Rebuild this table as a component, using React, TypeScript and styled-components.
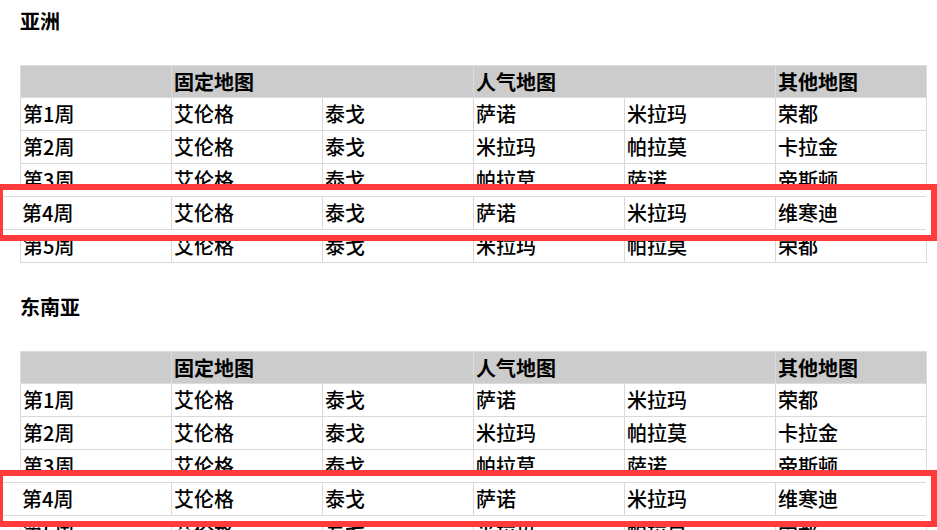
import React from 'react';
import styled, { createGlobalStyle } from 'styled-components';

const GlobalStyle = createGlobalStyle`
  html, body {
    margin: 0;
    padding: 0;
    background: #ffffff;
  }
  body {
    font-family: "Noto Sans CJK SC", "Noto Sans", sans-serif;
    color: #000;
    overflow: hidden;
  }
`;

const Page = styled.div`
  padding: 7px 10px 0 20px;
`;

const Section = styled.section`
  & + & {
    margin-top: 30px;
  }
`;

const Title = styled.h2`
  margin: 0 0 30px;
  font-size: 20px;
  font-weight: 700;
  line-height: 28px;
`;

const TableWrap = styled.div`
  position: relative;
  width: 907px;
`;

const Table = styled.table`
  width: 907px;
  border-collapse: collapse;
  table-layout: fixed;
  font-size: 20px;
  line-height: 28px;
`;

const HeadCell = styled.th`
  height: 32px;
  padding: 0 2px;
  background: #cccccc;
  border: 1px solid #dcdcdc;
  text-align: left;
  font-weight: 700;
  box-sizing: border-box;
`;

const Cell = styled.td`
  height: 33px;
  padding: 0 2px;
  border: 1px solid #d9d9d9;
  font-weight: 500;
  box-sizing: border-box;
  white-space: nowrap;
`;

// the pasted, red-framed copy of week 4 lying over the table
const Callout = styled.div<{ $top: number }>`
  position: absolute;
  left: -20px;
  top: ${(p) => p.$top}px;
  width: 928px;
  padding: 6px 0 5px;
  background: #ffffff;
  border: 6px solid #ff3b3b;
  border-left-width: 3px;
`;

const CalloutRow = styled.div`
  display: grid;
  grid-template-columns: 168px repeat(5, 151px);
  width: 923px;
  border-top: 1px solid #d9d9d9;
  border-bottom: 1px solid #d9d9d9;
  font-size: 20px;
  line-height: 28px;
  font-weight: 500;
`;

const CalloutCell = styled.div<{ $first?: boolean }>`
  height: 32px;
  display: flex;
  align-items: center;
  padding-left: ${(p) => (p.$first ? '19px' : '2px')};
  border-left: ${(p) => (p.$first ? 'none' : '1px solid #d9d9d9')};
  white-space: nowrap;
`;

type Week = string[];

const weeks: Week[] = [
  ['第1周', '艾伦格', '泰戈', '萨诺', '米拉玛', '荣都'],
  ['第2周', '艾伦格', '泰戈', '米拉玛', '帕拉莫', '卡拉金'],
  ['第3周', '艾伦格', '泰戈', '帕拉莫', '萨诺', '帝斯顿'],
  ['第4周', '艾伦格', '泰戈', '萨诺', '米拉玛', '维寒迪'],
  ['第5周', '艾伦格', '泰戈', '米拉玛', '帕拉莫', '荣都'],
];

const regions = ['亚洲', '东南亚'];

const RegionTable: React.FC<{ name: string }> = ({ name }) => {
  const highlighted = weeks[3];
  return (
    <Section>
      <Title>{name}</Title>
      <TableWrap>
        <Table>
          <colgroup>
            {Array.from({ length: 6 }).map((_, i) => (
              <col key={i} style={{ width: 151 }} />
            ))}
          </colgroup>
          <thead>
            <tr>
              <HeadCell />
              <HeadCell colSpan={2}>固定地图</HeadCell>
              <HeadCell colSpan={2}>人气地图</HeadCell>
              <HeadCell>其他地图</HeadCell>
            </tr>
          </thead>
          <tbody>
            {weeks.map((row) => (
              <tr key={row[0]}>
                {row.map((v, i) => (
                  <Cell key={i}>{v}</Cell>
                ))}
              </tr>
            ))}
          </tbody>
        </Table>
        <Callout $top={119}>
          <CalloutRow>
            {highlighted.map((v, i) => (
              <CalloutCell key={i} $first={i === 0}>
                {v}
              </CalloutCell>
            ))}
          </CalloutRow>
        </Callout>
      </TableWrap>
    </Section>
  );
};

const App: React.FC = () => (
  <>
    <GlobalStyle />
    <Page>
      {regions.map((r) => (
        <RegionTable key={r} name={r} />
      ))}
    </Page>
  </>
);

export default App;
